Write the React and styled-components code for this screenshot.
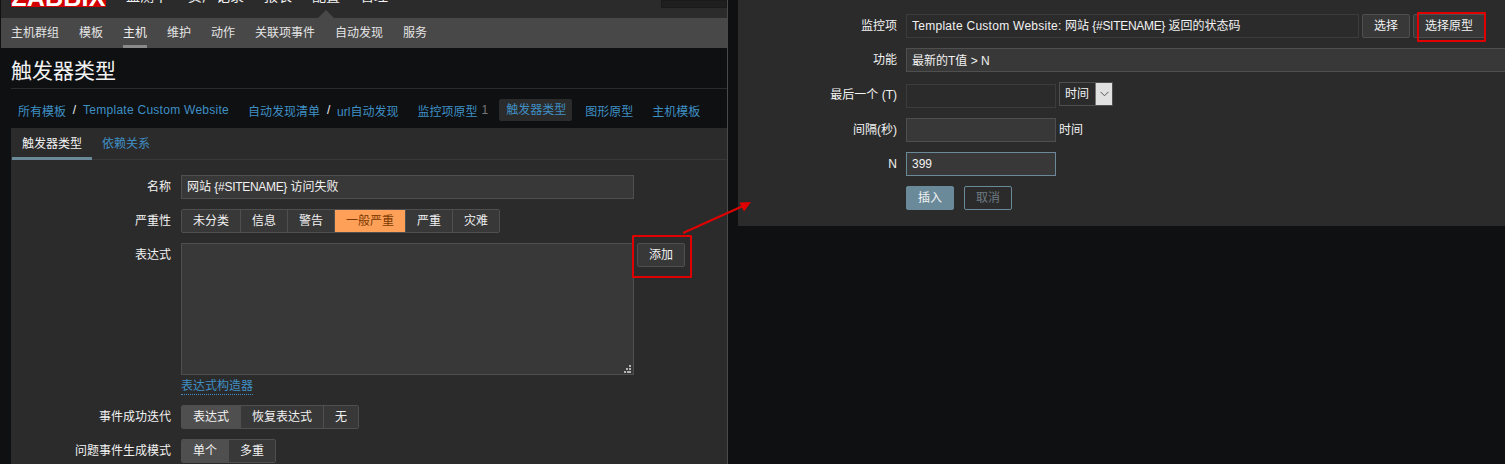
import React from "react";
import styled, { createGlobalStyle } from "styled-components";

const Global = createGlobalStyle`
  html, body { margin: 0; padding: 0; background: #0e1012; }
  body { font-family: Arial, "Liberation Sans", "Noto Sans CJK SC", sans-serif; font-size: 12px; color: #f2f2f2; }
  #root { width: 1505px; height: 464px; overflow: hidden; }
`;

const Desktop = styled.div`
  position: relative;
  width: 1505px;
  height: 464px;
  overflow: hidden;
  background: #0e1012;
`;
const LeftWindow = styled.div`
  position: absolute;
  left: 0;
  top: 0;
  width: 727px;
  height: 464px;
  padding-left: 1px;
  box-sizing: border-box;
  overflow: hidden;
  background: #0e1012;
`;
const WindowEdge = styled.div`
  position: absolute;
  left: 727px;
  top: 0;
  width: 1px;
  height: 464px;
  background: #4a4a4a;
`;
const RightWindow = styled.div`
  position: absolute;
  left: 738px;
  top: 0;
  width: 767px;
  height: 226px;
  box-sizing: border-box;
  padding-top: 14px;
  overflow: hidden;
  background: #2b2b2b;
`;
const TopBar = styled.div`
  display: flex;
  align-items: flex-start;
  height: 18px;
  padding-left: 10px;
  overflow: hidden;
  background: #2b2b2b;
`;
const Logo = styled.div`
  width: 95px;
  height: 30px;
  box-sizing: border-box;
  padding-top: 8px;
  margin-top: -23px;
  background: #d40000;
  color: #fff;
  font-weight: 700;
  font-size: 25px;
  line-height: 25px;
  letter-spacing: 0.2px;
  text-align: center;
  flex: none;
`;
const TopMenu = styled.div`
  display: flex;
  gap: 20px;
  margin: -12px 0 0 20px;
  font-size: 14px;
  line-height: 16px;
  color: #f2f2f2;
`;
const SearchStub = styled.div`
  margin-left: auto;
  width: 66px;
  height: 8px;
  box-sizing: border-box;
  background: #1f1f1f;
  border: 1px solid #1a1a1a;
`;
const Pointer = styled.div`
  position: absolute;
  left: 318px;
  top: 10px;
  width: 0;
  height: 0;
  border-left: 8px solid transparent;
  border-right: 8px solid transparent;
  border-bottom: 8px solid #484848;
`;
const SubNav = styled.div`
  display: flex;
  gap: 20px;
  height: 30px;
  padding-left: 10px;
  background: #484848;
`;
const SubItem = styled.div`
  height: 30px;
  box-sizing: border-box;
  line-height: 31px;
  color: ${p => (p.$active ? "#f2f2f2" : "#e4e4e4")};
  border-bottom: 3px solid ${p => (p.$active ? "#8a8a8a" : "transparent")};
`;
const TitleBar = styled.div`
  margin-left: 10px;
  height: 41px;
  box-sizing: border-box;
  border-bottom: 1px solid #2b2b2b;
`;
const Title = styled.h1`
  margin: 0;
  font-size: 21px;
  font-weight: 400;
  line-height: 46px;
  color: #f2f2f2;
`;
const Crumbs = styled.div`
  display: flex;
  align-items: center;
  box-sizing: border-box;
  height: 39px;
  padding: 3px 0 0 17px;
`;
const CrumbGroup = styled.div`
  display: flex;
  align-items: center;
  margin-right: ${p => p.$gap || 19}px;
`;
const Link = styled.span`
  color: #3f8fc4;
  letter-spacing: ${p => p.$track || 0}px;
`;
const Sep = styled.span`
  width: 17px;
  text-align: center;
  color: #f2f2f2;
`;
const Count = styled.span`
  color: #767676;
  margin-left: 4px;
`;
const ActiveCrumb = styled.span`
  height: 22px;
  line-height: 22px;
  padding: 0 6px 0 7px;
  margin: 0 13px 0 -6px;
  border-radius: 2px;
  background: #2b2b2b;
  color: #3f8fc4;
`;
const Panel = styled.div`
  margin-left: 10px;
  background: #2b2b2b;
  height: 336px;
`;
const Tabs = styled.div`
  display: flex;
  height: 32px;
  box-sizing: border-box;
  border-bottom: 1px solid #383838;
`;
const Tab = styled.div`
  width: ${p => p.$w}px;
  margin-left: ${p => p.$ml || 0}px;
  height: 32px;
  box-sizing: border-box;
  text-align: center;
  line-height: 32px;
  color: ${p => (p.$active ? "#f2f2f2" : "#3f8fc4")};
  border-bottom: 3px solid ${p => (p.$active ? "#6a8a9a" : "transparent")};
`;
const Form = styled.div`
  display: flex;
  flex-direction: column;
  gap: 10px;
  padding-top: ${p => p.$top || 0}px;
`;
const Row = styled.div`
  display: grid;
  grid-template-columns: ${p => p.$label}px 1fr;
  column-gap: ${p => p.$gap}px;
  align-items: start;
`;
const Label = styled.div`
  text-align: right;
  line-height: 24px;
  color: #f2f2f2;
  padding-top: ${p => p.$pt || 0}px;
`;
const Field = styled.div`
  display: flex;
  align-items: flex-start;
`;
const TextInput = styled.div`
  box-sizing: border-box;
  width: ${p => p.$w}px;
  height: 24px;
  line-height: ${p => p.$lh || 22}px;
  padding: 0 5px;
  flex: none;
  background: ${p => (p.$ro ? "#2b2b2b" : "#383838")};
  border: 1px solid ${p => (p.$focus ? "#6a8a9a" : p.$ro ? "#3c3c3c" : "#4f4f4f")};
  color: #f2f2f2;
  margin-top: ${p => p.$mt || 0}px;
`;
const Track = styled.span`
  letter-spacing: ${p => p.$v}px;
`;
const TextArea = styled.div`
  position: relative;
  box-sizing: border-box;
  width: 453px;
  height: 132px;
  background: #383838;
  border: 1px solid #4f4f4f;
`;
const Grip = styled.svg`
  position: absolute;
  right: 1px;
  bottom: 1px;
`;
const Btn = styled.div`
  box-sizing: border-box;
  height: 24px;
  width: ${p => p.$w}px;
  flex: none;
  line-height: 22px;
  text-align: center;
  border-radius: 2px;
  border: 1px solid ${p => p.$border || "#4f4f4f"};
  background: ${p => p.$bg || "#383838"};
  color: ${p => p.$color || "#f2f2f2"};
  margin-left: ${p => p.$ml || 0}px;
`;
const Segments = styled.div`
  display: flex;
  height: 24px;
  box-sizing: border-box;
  border: 1px solid #4f4f4f;
  border-radius: 2px;
  overflow: hidden;
`;
const Seg = styled.div`
  box-sizing: border-box;
  height: 22px;
  line-height: 22px;
  padding: 0 11px;
  background: ${p => (p.$on ? (p.$warn ? "#ffa059" : "#4f4f4f") : "#383838")};
  color: ${p => (p.$warn ? "#7a3a00" : "#f2f2f2")};
  border-left: ${p => (p.$first ? "0" : "1px solid #4f4f4f")};
`;
const Stack = styled.div`
  display: flex;
  flex-direction: column;
`;
const Builder = styled.span`
  align-self: flex-start;
  margin-top: 4px;
  line-height: 14px;
  color: #3f8fc4;
  border-bottom: 1px dotted #3f8fc4;
  padding-bottom: 1px;
`;
const SelectBox = styled.div`
  display: flex;
  box-sizing: border-box;
  width: 54px;
  height: 24px;
  border: 1px solid #4f4f4f;
  background: #2b2b2b;
  margin-left: 3px;
  flex: none;
`;
const SelectText = styled.div`
  flex: 1;
  line-height: 22px;
  padding-left: 5px;
`;
const SelectArrow = styled.div`
  width: 17px;
  display: flex;
  align-items: center;
  justify-content: center;
  background: #e1e1e1;
  border-left: 1px solid #777;
  box-sizing: border-box;
`;
const Plain = styled.span`
  line-height: 24px;
  margin-left: 3px;
`;
const RedBox = styled.div`
  position: absolute;
  left: ${p => p.$x}px;
  top: ${p => p.$y}px;
  width: ${p => p.$w}px;
  height: ${p => p.$h}px;
  box-sizing: border-box;
  border: 2px solid #e00000;
  border-radius: 1px;
`;
const Arrow = styled.svg`
  position: absolute;
  left: 680px;
  top: 198px;
`;

const seg = (items, on, warn) => (
  <Segments>
    {items.map((t, i) => (
      <Seg key={t} $first={i === 0} $on={i === on} $warn={warn && i === on}>{t}</Seg>
    ))}
  </Segments>
);

export default function App() {
  return (
    <Desktop>
      <Global />
      <LeftWindow>
        <TopBar>
          <Logo>ZABBIX</Logo>
          <TopMenu>
            <span>监测中</span><span>资产记录</span><span>报表</span><span>配置</span><span>管理</span>
          </TopMenu>
          <SearchStub />
        </TopBar>
        <Pointer />
        <SubNav>
          {["主机群组", "模板", "主机", "维护", "动作", "关联项事件", "自动发现", "服务"].map(t => (
            <SubItem key={t} $active={t === "主机"}>{t}</SubItem>
          ))}
        </SubNav>
        <TitleBar><Title>触发器类型</Title></TitleBar>
        <Crumbs>
          <CrumbGroup><Link>所有模板</Link><Sep>/</Sep><Link $track={0.27}>Template Custom Website</Link></CrumbGroup>
          <CrumbGroup><Link>自动发现清单</Link><Sep>/</Sep><Link>url自动发现</Link></CrumbGroup>
          <CrumbGroup $gap={17}><Link>监控项原型</Link><Count>1</Count></CrumbGroup>
          <ActiveCrumb>触发器类型</ActiveCrumb>
          <CrumbGroup><Link>图形原型</Link></CrumbGroup>
          <CrumbGroup><Link>主机模板</Link></CrumbGroup>
        </Crumbs>
        <Panel>
          <Tabs>
            <Tab $active $w={80} $ml={1}>触发器类型</Tab>
            <Tab $w={68}>依赖关系</Tab>
          </Tabs>
          <Form $top={15}>
            <Row $label={160} $gap={10}>
              <Label>名称</Label>
              <TextInput $w={453}>网站 <Track $v={-0.3}>{"{#SITENAME}"}</Track> 访问失败</TextInput>
            </Row>
            <Row $label={160} $gap={10}>
              <Label>严重性</Label>
              <Field>{seg(["未分类", "信息", "警告", "一般严重", "严重", "灾难"], 3, true)}</Field>
            </Row>
            <Row $label={160} $gap={10}>
              <Label>表达式</Label>
              <Stack>
                <Field>
                  <TextArea>
                    <Grip width="8" height="8" viewBox="0 0 8 8">
                      <path d="M5 0h2v2H5zM2 3h2v2H2zM5 3h2v2H5zM0 6h2v2H0zM3 6h2v2H3zM5 6h2v2H5z" fill="#b5b5b5" />
                    </Grip>
                  </TextArea>
                  <Btn $w={48} $ml={3}>添加</Btn>
                </Field>
                <Builder>表达式构造器</Builder>
              </Stack>
            </Row>
            <Row $label={160} $gap={10}>
              <Label>事件成功迭代</Label>
              <Field>{seg(["表达式", "恢复表达式", "无"], 0)}</Field>
            </Row>
            <Row $label={160} $gap={10}>
              <Label>问题事件生成模式</Label>
              <Field>{seg(["单个", "多重"], 0)}</Field>
            </Row>
          </Form>
        </Panel>
      </LeftWindow>
      <WindowEdge />
      <RightWindow>
        <Form>
          <Row $label={159} $gap={9}>
            <Label>监控项</Label>
            <Field>
              <TextInput $ro $w={453}><Track $v={0.27}>Template Custom Website:</Track> 网站 <Track $v={-0.3}>{"{#SITENAME}"}</Track> 返回的状态码</TextInput>
              <Btn $w={48} $ml={3}>选择</Btn>
              <Btn $w={72} $ml={3}>选择原型</Btn>
            </Field>
          </Row>
          <Row $label={159} $gap={9}>
            <Label>功能</Label>
            <TextInput $w={620} $lh={25}>最新的T值 &gt; N</TextInput>
          </Row>
          <Row $label={159} $gap={9}>
            <Label $pt={1}>最后一个 (T)</Label>
            <Field>
              <TextInput $ro $w={150} $mt={2} />
              <SelectBox>
                <SelectText>时间</SelectText>
                <SelectArrow>
                  <svg width="9" height="6" viewBox="0 0 9 6"><path d="M.5.8 4.5 4.8 8.5.8" fill="none" stroke="#555" strokeWidth="1" /></svg>
                </SelectArrow>
              </SelectBox>
            </Field>
          </Row>
          <Row $label={159} $gap={9}>
            <Label>间隔(秒)</Label>
            <Field>
              <TextInput $w={150} />
              <Plain>时间</Plain>
            </Field>
          </Row>
          <Row $label={159} $gap={9}>
            <Label>N</Label>
            <TextInput $w={150} $focus>399</TextInput>
          </Row>
          <Row $label={159} $gap={9}>
            <span />
            <Field>
              <Btn $w={48} $bg="#6a8a9a" $border="#6a8a9a">插入</Btn>
              <Btn $w={48} $ml={10} $bg="#2b2b2b" $border="#6a8a9a" $color="#6f7b82">取消</Btn>
            </Field>
          </Row>
        </Form>
      </RightWindow>
      <RedBox $x={632} $y={235} $w={60} $h={43} />
      <RedBox $x={1417} $y={12} $w={69} $h={30} />
      <Arrow width="76" height="40" viewBox="0 0 76 40">
        <path d="M3 35 63 8" stroke="#e00000" strokeWidth="2" fill="none" />
        <path d="M71 4 59.5 4.5 64 13.5Z" fill="#e00000" />
      </Arrow>
    </Desktop>
  );
}
